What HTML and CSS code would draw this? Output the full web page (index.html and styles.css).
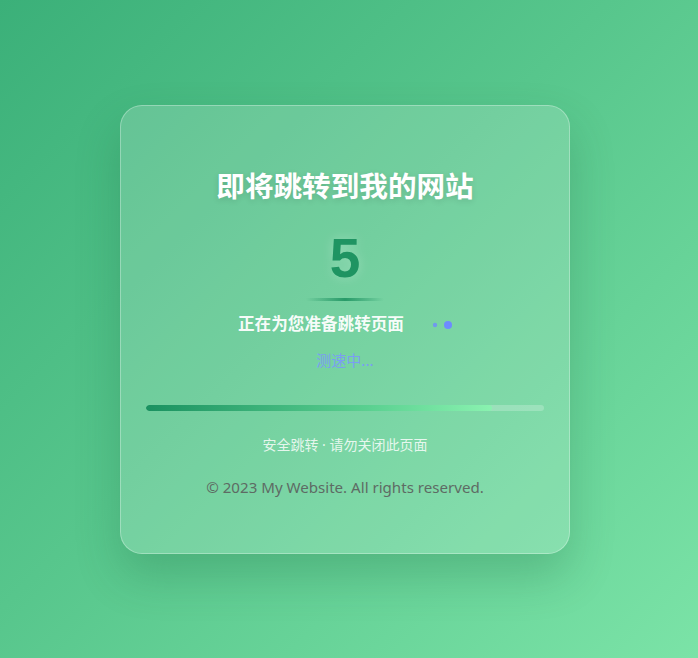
FILE: index.html
```html
<!DOCTYPE html>
<html lang="zh-CN">
<head>
<meta charset="utf-8">
<title>即将跳转</title>
<link rel="stylesheet" href="styles.css">
</head>
<body>
<div class="card">
  <h1 class="title">即将跳转到我的网站</h1>
  <div class="count">5</div>
  <div class="underline"></div>
  <div class="status">
    <span class="status-text">正在为您准备跳转页面</span>
    <span class="dots"><i class="dot d1"></i><i class="dot d2"></i><i class="dot d3"></i></span>
  </div>
  <div class="speed">测速中...</div>
  <div class="bar"><div class="fill" style="width: 87%"></div></div>
  <div class="safe">安全跳转 · 请勿关闭此页面</div>
  <div class="copy">© 2023 My Website. All rights reserved.</div>
</div>
</body>
</html>
```
FILE: styles.css
```css
html, body { margin: 0; height: 100%; }
body {
  font-family: "Noto Sans", "Noto Sans CJK SC", sans-serif;
  background: linear-gradient(135deg, #3bb079 0%, #57c68c 45%, #7be3a7 100%);
  display: flex;
  align-items: center;
  justify-content: center;
  padding-right: 8px;
  box-sizing: border-box;
  overflow: hidden;
}
.card {
  width: 450px;
  height: 449px;
  box-sizing: border-box;
  padding: 61px 25px 0;
  border-radius: 22px;
  border: 1px solid rgba(255,255,255,0.3);
  background: linear-gradient(135deg, rgba(255,255,255,0.17), rgba(255,255,255,0.17));
  box-shadow: 0 22px 45px rgba(20,90,55,0.24);
  display: flex;
  flex-direction: column;
  align-items: center;
  text-align: center;
}
.title {
  margin: 0;
  font-size: 28.6px;
  line-height: 36px;
  font-weight: 700;
  color: #fff;
  text-shadow: 0 2px 6px rgba(0,0,0,0.12);
  font-family: "Noto Sans CJK SC", sans-serif;
}
.count {
  margin-top: 28px;
  font-family: "Liberation Sans", Arial, sans-serif;
  font-size: 55px;
  line-height: 55px;
  font-weight: 700;
  color: #1f9462;
  text-shadow: 0 0 12px rgba(255,255,255,0.25);
}
.underline {
  margin-top: 12px;
  width: 78px;
  height: 3px;
  border-radius: 2px;
  background: linear-gradient(90deg, rgba(31,148,98,0), rgba(31,148,98,0.9) 50%, rgba(31,148,98,0));
}
.status {
  margin-top: 11px;
  display: flex;
  align-items: center;
  gap: 14px;
  height: 22px;
}
.status-text {
  font-family: "Noto Sans CJK SC", sans-serif;
  font-size: 16.6px;
  line-height: 22px;
  font-weight: 700;
  color: rgba(255,255,255,0.95);
}
.dots { display: flex; gap: 5px; align-items: center; margin-top: 4px; }
.dot {
  width: 8px; height: 8px; border-radius: 50%;
  background: #6e8bff;
  display: block;
}
.d1 { transform: scale(0); }
.d2 { transform: scale(0.55); opacity: 0.8; }
.d3 { transform: scale(1); }
.speed {
  margin-top: 15px;
  font-family: "Noto Sans CJK SC", sans-serif;
  font-size: 15px;
  line-height: 22px;
  color: #7b9df2;
}
.bar {
  margin-top: 34px;
  align-self: stretch;
  height: 6px;
  border-radius: 3px;
  background: rgba(255,255,255,0.22);
  overflow: hidden;
}
.fill {
  height: 100%;
  border-radius: 3px;
  background: linear-gradient(90deg, #1a9160, #5bd191 65%, #8af2b0);
}
.safe {
  margin-top: 24px;
  font-family: "Noto Sans", "Noto Sans CJK SC", sans-serif;
  font-size: 14px;
  line-height: 20px;
  color: rgba(255,255,255,0.82);
}
.copy {
  margin-top: 21px;
  font-size: 15.1px;
  line-height: 22px;
  color: #5e6b64;
}
```
